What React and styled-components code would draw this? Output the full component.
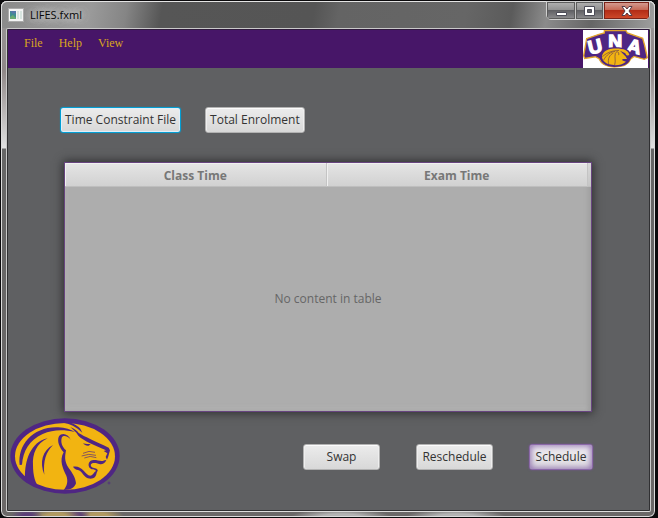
import React from "react";
import styled, { createGlobalStyle, css } from "styled-components";

const GlobalStyle = createGlobalStyle`
  * { box-sizing: border-box; }
  body { margin: 0; background: #0b0a0c; }
`;

const uiFont = `"Open Sans", "Noto Sans", sans-serif`;

const Window = styled.div`
  display: flex;
  flex-direction: column;
  min-height: 100vh;
  margin-right: 2px;
  padding: 0 4px 5px 5px;
  border: 1px solid #0b0a0c;
  border-radius: 7px;
  box-shadow: inset 0 0 0 1px #dcdcdc;
  font-family: ${uiFont};
  font-size: 12px;
  background:
    radial-gradient(ellipse 16px 10px at 26px 100%, #5b3d78 30%, transparent),
    radial-gradient(ellipse 26px 10px at 55px 100%, #b19a62 40%, transparent),
    radial-gradient(ellipse 14px 10px at 76px 100%, #5b3d78 30%, transparent),
    radial-gradient(ellipse 26px 10px at 97px 100%, #b19a62 40%, transparent),
    radial-gradient(ellipse 50px 8px at 340px 100%, #b4b4b4 40%, transparent),
    radial-gradient(ellipse 50px 8px at 455px 100%, #b4b4b4 40%, transparent),
    linear-gradient(#999 0, #8f8888 70px, #d8d8d8 140px, #e2e2e2 147px, #666 148px, #6b6868 100%);
`;

const TitleBar = styled.header`
  display: flex;
  align-items: flex-start;
  height: 27px;
  margin: 0 -4px 0 -5px;
  padding-left: 7px;
  border-radius: 6px 6px 0 0;
  box-shadow: inset 0 1px #e4e4e4, inset 1px 0 #dcdcdc, inset -1px 0 #dcdcdc;
  background: linear-gradient(100deg, #8a8a8a 0, #9a9a9a 90px, #858585 125px, #565656 160px,
    #555 310px, #646464 335px, #666 460px, #5b5b5b 505px, #8b8b8b 540px, #666 585px, #a0a0a0 650px);
`;

const AppIcon = styled.svg`
  width: 16px;
  height: 14px;
  margin-top: 7px;
`;

const Title = styled.h1`
  flex: 1;
  margin: 6px 0 0 6px;
  color: #080808;
  font-size: 11px;
  line-height: 16px;
  font-weight: 400;
  text-shadow: 0 0 6px #ccc, 0 0 8px #ccc, 0 0 12px #ccc, 0 0 16px #ccc;
`;

const Controls = styled.div`
  display: flex;
  height: 19px;
  margin-right: 5px;
  border: 1px solid #d0d0d0;
  border-radius: 0 0 5px 5px;
  overflow: hidden;
`;

const ControlButton = styled.button`
  display: grid;
  place-items: center;
  width: ${(p) => (p.$close ? "46px" : "28px")};
  padding: 0;
  border: 0;
  border-left: ${(p) => (p.$first ? "0" : "1px solid #c8c8c8")};
  background: ${(p) =>
    p.$close
      ? "linear-gradient(#d5a197, #c66a57 45%, #b32d17 50%, #d04b2b)"
      : "linear-gradient(#b2b2b2, #929292 45%, #606064 50%, #8e8e90)"};
  box-shadow: inset 0 0 0 1px ${(p) => (p.$close ? "#7b2318" : "#5c5c5c")};
`;

const Scene = styled.main`
  display: flex;
  flex: 1;
  flex-direction: column;
  border: 1px solid #c9c9c9;
  border-bottom-color: #dedede;
  border-radius: 2px;
  background: #5f6062;
  box-shadow: inset 0 0 0 1px #303032;
`;

const MenuBar = styled.nav`
  display: flex;
  align-items: flex-start;
  gap: 16px;
  padding: 1px 2px 0 16px;
  margin: 0 1px;
  height: 39px;
  background: #471668;
  border-top: 1px solid #2f1a3d;
`;

const MenuButton = styled.button`
  margin-top: 5px;
  padding: 0;
  border: 0;
  background: none;
  color: #daa520;
  font: 12px/14px "Liberation Serif", serif;
`;

const UnaLogo = styled.svg`
  width: 65px;
  height: 38px;
  margin: -1px -1px 0 auto;
  overflow: visible;
`;

const FxButton = styled.button`
  min-width: ${(p) => (p.$wide ? "77px" : "64px")};
  height: 26px;
  padding: 0 4px;
  border: 1px solid #b2b2b2;
  border-radius: 3px;
  color: #333;
  font: 12px/16px ${uiFont};
  white-space: nowrap;
  background: linear-gradient(#ececec, #d8d8d8);
  box-shadow: inset 0 1px #fbfbfb, inset 1px 0 #eee, inset -1px 0 #eee;
  ${(p) =>
    p.$focused &&
    css`
      border-color: #039ed3;
      box-shadow: 0 0 1px #039ed3, inset 0 0 0 1px #dfeffa;
    `}
  ${(p) =>
    p.$glow &&
    css`
      border-color: #8b68a8;
      box-shadow: 0 0 2px #76539a, inset 0 0 6px 1px #8e6ead;
      background: linear-gradient(#f0eef2, #dedce0);
    `}
`;

const Imports = styled.section`
  display: flex;
  gap: 24px;
  padding: 39px 52px 0 53px;
`;

const TableFrame = styled.section`
  flex: 1;
  margin: 29px 58px 0 57px;
  border: 1px solid #67447f;
  background: #adadad;
  box-shadow: 0 0 9px 1px #2c2c2e, inset -3px 0 4px #9f9f9f, inset 0 -3px 4px #b4b4b4;
`;

const Table = styled.table`
  width: 100%;
  border-collapse: separate;
  border-spacing: 0;
  table-layout: fixed;
`;

const ColumnHead = styled.th`
  height: 24px;
  padding: 2px 0 0;
  border-right: 1px solid #c4c4c4;
  border-bottom: 1px solid #bebebe;
  box-shadow: inset 1px 1px #f0f0f0;
  background: linear-gradient(#e5e5e5, #d1d1d1);
  color: #777;
  font-size: 12px;
  line-height: 16px;
  font-weight: 700;
`;

const CornerHead = styled.td`
  width: 3px;
  padding: 0;
  border-bottom: 1px solid #bebebe;
  background: linear-gradient(#d8d8d8, #c6c6c6);
`;

const EmptyCell = styled.td`
  height: 223px;
  padding: 1px 0 0;
  color: #666;
  line-height: 16px;
  text-align: center;
`;

const Footer = styled.footer`
  display: flex;
  align-items: flex-start;
  padding: 6px 57px 17px 3px;
`;

const LionLogo = styled.svg`
  width: 110px;
  height: 76px;
`;

const Actions = styled.div`
  display: flex;
  gap: 36px;
  margin: 26px 0 0 auto;
`;

function Lion() {
  return (
    <LionLogo viewBox="29 22 330 228" role="img" aria-label="Lion">
      <ellipse cx="194" cy="136" rx="164" ry="113" fill="#4f2683" />
      <ellipse cx="194" cy="137" rx="150" ry="100" fill="#f2b411" />
      <g fill="#4f2683">
        <path d="M58 163C51 103 98 47 174 50C194 51 212 57 224 64C188 56 157 57 127 70C87 88 68 121 65 162Z" />
        <path d="M187 36C208 38 228 48 246 66L240 54C234 47 220 39 207 35ZM235 67C250 77 290 94 325 111L329 119L324 137L320 147L316 139L321 128L310 121L317 119C286 104 249 91 234 75L228 66L210 49C224 55 231 61 235 67Z" />
        <path d="M142 83C108 98 96 130 98 164C98 193 105 222 119 232C97 228 82 216 74 201C73 151 90 94 142 83Z" />
        <path d="M158 103C126 119 117 155 132 192C128 151 137 124 158 103Z" />
        <path d="M211 87C202 75 187 72 184 82C181 93 184 108 197 119C194 137 191 151 205 172C216 187 225 199 227 218C223 231 212 238 190 238C200 225 204 212 198 195C188 174 176 150 190 125C177 111 169 91 176 77C184 64 204 69 211 87Z" />
        <path d="M218 168C231 165 241 171 250 180C258 188 264 198 274 194C280 191 280 184 287 181C286 178 280 176 274 176C263 171 262 158 270 151C278 145 292 149 304 151C309 152 310 148 318 148C314 159 304 162 297 160C289 157 276 154 272 161C269 168 277 172 284 173C291 175 295 179 290 184C288 188 289 193 284 199C277 206 263 205 256 199C247 192 243 180 233 178C227 177 221 173 218 168Z" />
        <path d="M248 98C258 101 264 100 271 101L265 105C257 106 253 103 248 98Z" />
      </g>
      <g fill="none" stroke="#4f2683" strokeWidth="2">
        <path d="M248 128Q266 118 284 125M244 136Q265 127 287 134M252 142Q269 133 288 141" />
        <circle cx="326" cy="217" r="3" />
      </g>
    </LionLogo>
  );
}

function Una() {
  return (
    <UnaLogo viewBox="0 0 195 115" preserveAspectRatio="none" role="img" aria-label="UNA">
      <path fill="#fff" d="M0 0H195V115H0Z" />
      <path
        fill="#4f2683"
        stroke="#e3a52b"
        strokeWidth="4"
        d="M11 26L48 13L64 9V2L90 2L129 2L133 9L179 25L185 47L193 84L184 89L153 80L143 88C137 104 121 112 94 112C67 112 54 101 48 87L37 81L5 86L2 78Z"
      />
      <g fill="#fff" stroke="#fff" strokeWidth="4" fontFamily="Liberation Sans, sans-serif" fontWeight="700" fontSize="58">
        <text x="20" y="74" transform="rotate(-13 20 74)">U</text>
        <text x="76" y="54">N</text>
        <text x="129" y="64" transform="rotate(14 129 64)">A</text>
      </g>
      <path fill="#4f2683" d="M53 69C61 53 77 52 97 52C126 52 144 59 144 79C143 103 120 112 94 112C63 111 47 94 53 69Z" />
      <path fill="#f2b411" d="M60 71C68 59 82 56 99 56C122 56 137 62 139 76C133 79 129 76 127 70L111 63L128 80L132 88L119 88C114 94 125 94 129 96C116 108 94 108 78 104C60 97 52 83 60 71Z" />
      <g fill="none" stroke="#6b3d4c" strokeWidth="2">
        <path d="M58 81C73 67 89 62 108 62M62 91C70 75 84 66 96 65M77 103C73 87 81 74 91 70M95 106C99 92 94 83 97 71C102 61 109 67 107 76" />
      </g>
    </UnaLogo>
  );
}

export default function App() {
  return (
    <>
      <GlobalStyle />
      <Window>
        <TitleBar>
          <AppIcon viewBox="0 0 16 14" aria-hidden="true">
            <path fill="#f4f4f4" stroke="#aaa" d="M.5.5H15.5V13.5H.5Z" />
            <path fill="#408d92" d="M2 3H8V11H2Z" />
            <path fill="#5678a9" d="M2 3H8V5L5 6Z" />
            <path fill="#69aa72" d="M2 9L5 7L8 10V11H2Z" />
            <path fill="#d7e4df" d="M9 3H11V11H9ZM12 3H14V11H12Z" />
          </AppIcon>
          <Title>LIFES.fxml</Title>
          <Controls>
            <ControlButton $first aria-label="Minimize">
              <svg width="13" height="14" viewBox="0 0 13 14">
                <path d="M1.5 8.5H11.5V11.5H1.5Z" fill="#fff" stroke="#4c4c58" />
              </svg>
            </ControlButton>
            <ControlButton aria-label="Maximize">
              <svg width="13" height="14" viewBox="0 0 13 14">
                <path fillRule="evenodd" d="M1.5 2.5H11.5V11.5H1.5ZM4.5 5.5V8.5H8.5V5.5Z" fill="#fff" stroke="#4c4c58" />
              </svg>
            </ControlButton>
            <ControlButton $close aria-label="Close">
              <svg width="14" height="14" viewBox="0 0 14 14">
                <path d="M2 2.5H5L7 5L9 2.5H12L9 7L12 11.5H9L7 9L5 11.5H2L5 7Z" fill="#fff" stroke="#563b46" />
              </svg>
            </ControlButton>
          </Controls>
        </TitleBar>
        <Scene>
          <MenuBar>
            <MenuButton>File</MenuButton>
            <MenuButton>Help</MenuButton>
            <MenuButton>View</MenuButton>
            <Una />
          </MenuBar>
          <Imports>
            <FxButton $focused>Time Constraint File</FxButton>
            <FxButton>Total Enrolment</FxButton>
          </Imports>
          <TableFrame>
            <Table>
              <colgroup>
                <col />
                <col />
                <col width="3" />
              </colgroup>
              <thead>
                <tr>
                  <ColumnHead scope="col">Class Time</ColumnHead>
                  <ColumnHead scope="col">Exam Time</ColumnHead>
                  <CornerHead />
                </tr>
              </thead>
              <tbody>
                <tr>
                  <EmptyCell colSpan={3}>No content in table</EmptyCell>
                </tr>
              </tbody>
            </Table>
          </TableFrame>
          <Footer>
            <Lion />
            <Actions>
              <FxButton $wide>Swap</FxButton>
              <FxButton $wide>Reschedule</FxButton>
              <FxButton $glow>Schedule</FxButton>
            </Actions>
          </Footer>
        </Scene>
      </Window>
    </>
  );
}
